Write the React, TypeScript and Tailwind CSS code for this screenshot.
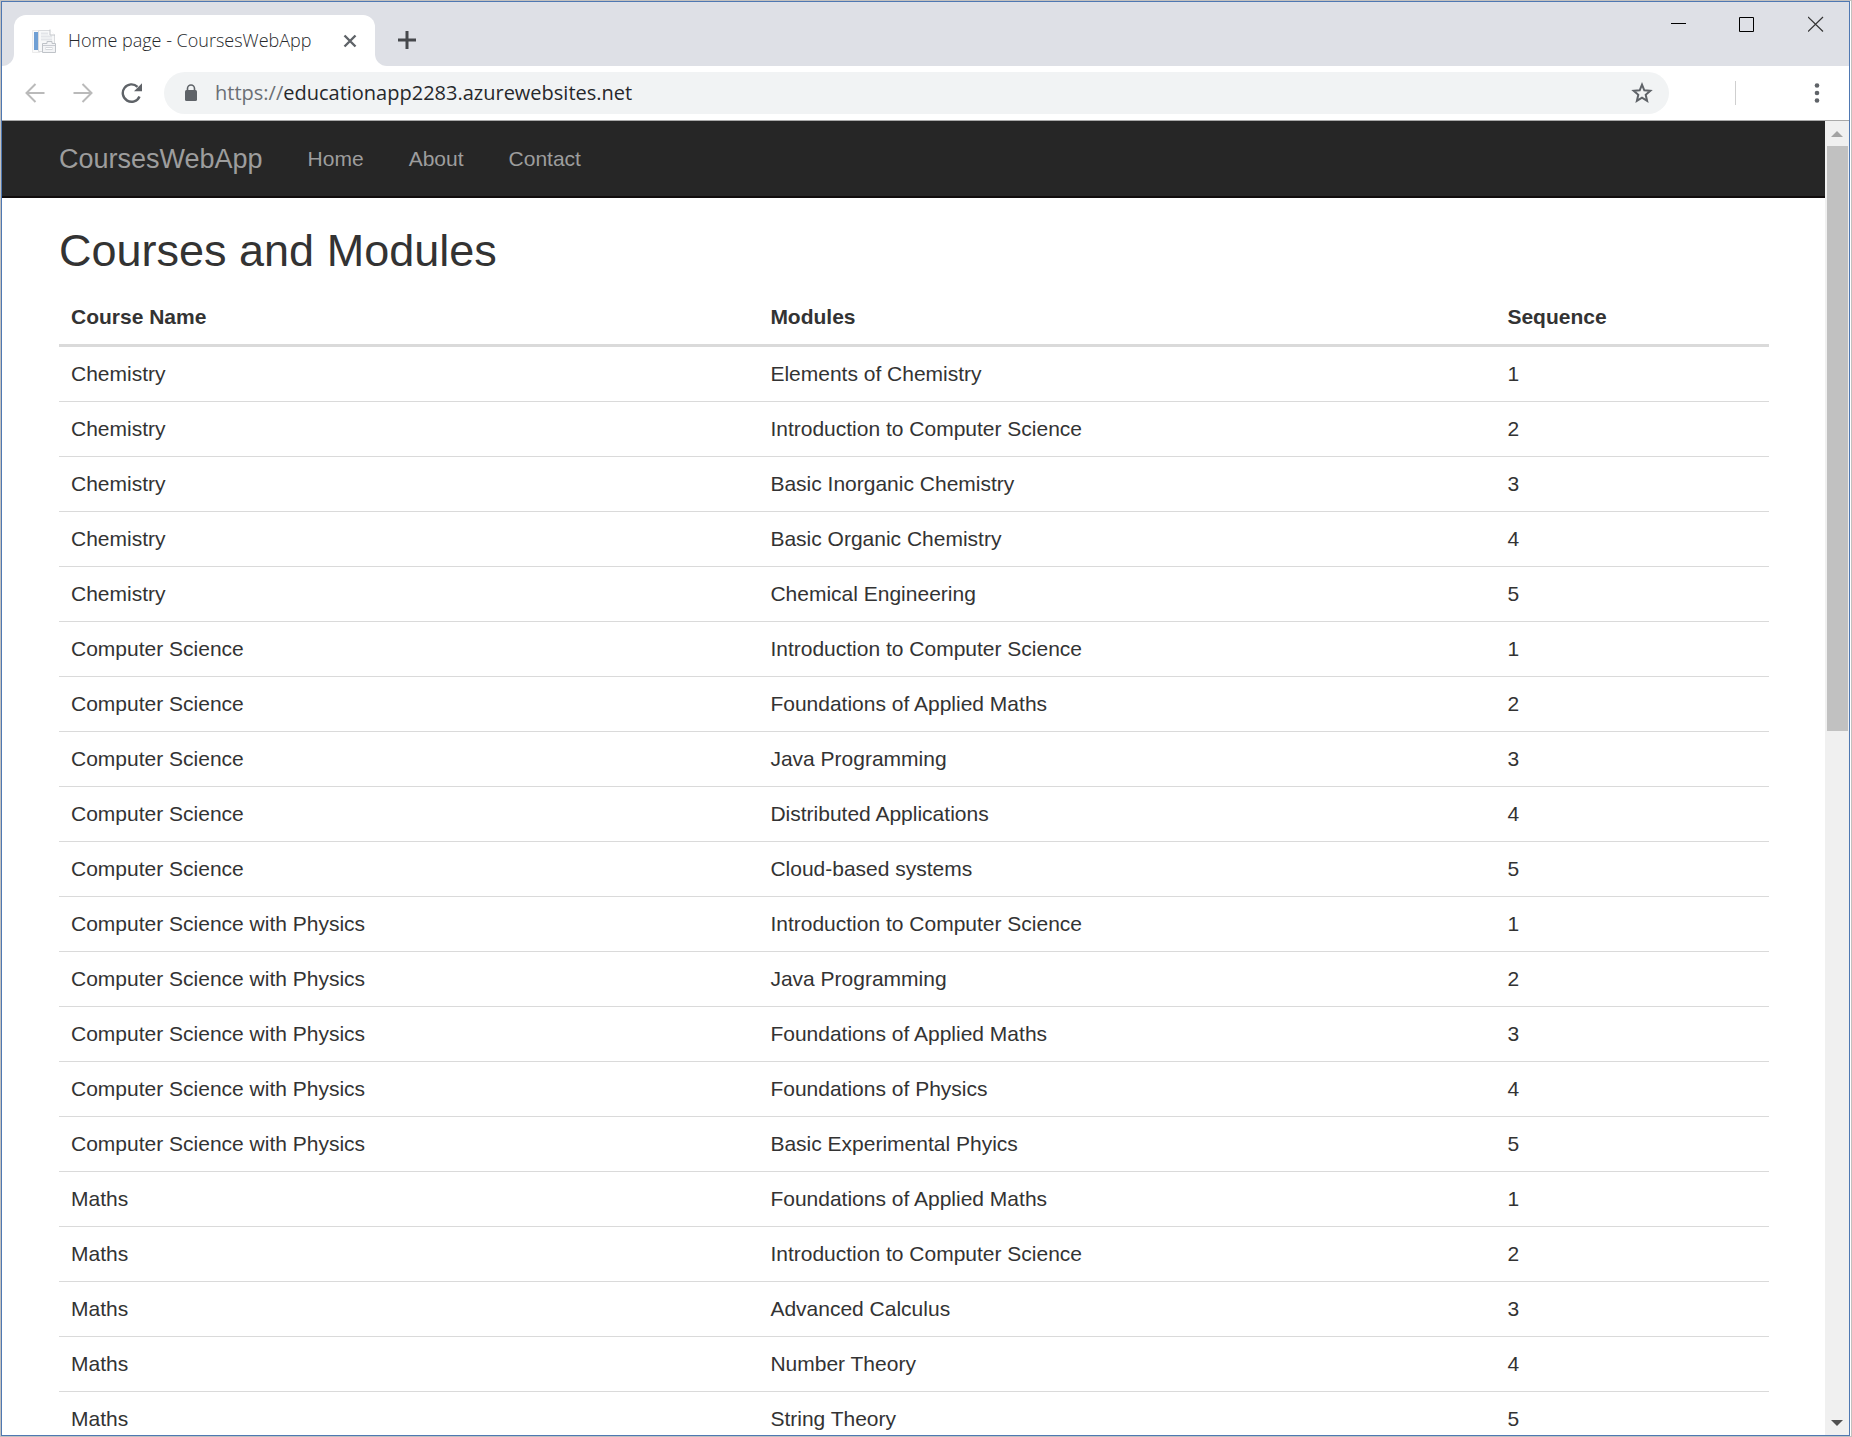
import React from "react";

const courses: [string, string[]][] = [
  ["Chemistry", ["Elements of Chemistry", "Introduction to Computer Science", "Basic Inorganic Chemistry", "Basic Organic Chemistry", "Chemical Engineering"]],
  ["Computer Science", ["Introduction to Computer Science", "Foundations of Applied Maths", "Java Programming", "Distributed Applications", "Cloud-based systems"]],
  ["Computer Science with Physics", ["Introduction to Computer Science", "Java Programming", "Foundations of Applied Maths", "Foundations of Physics", "Basic Experimental Phyics"]],
  ["Maths", ["Foundations of Applied Maths", "Introduction to Computer Science", "Advanced Calculus", "Number Theory", "String Theory"]],
];

function Favicon() {
  return (
    <svg width="24" height="24" viewBox="0 0 24 24" aria-hidden="true">
      <path d="M.5 1.500H8V23.500H.5Z" fill="#fafafa" stroke="#ebebeb" />
      <rect x="2" y="3" width="4" height="18" fill="#6f9fd4" />
      <path d="M6.500 1.500H18L22.500 6V22.500H6.500Z" fill="#f7f8f9" stroke="#d9dbde" />
      <path d="M9 4.500H16M9 7.500H20M9 10.500H20" stroke="#e3e5e9" strokeWidth="2" />
      <path d="M18 .5V6H23" fill="#fff" stroke="#c4c7cb" />
      <path d="M10.500 14.500V23.500H23.500V14.500H20V12.500H15V14.500Z" fill="#f3f4f6" stroke="#bfc3c8" />
      <path d="M11 16.500H23" stroke="#c9ccd2" />
      <rect x="14" y="18.500" width="6" height="2" fill="#fff" stroke="#d5d8dc" />
    </svg>
  );
}

function TabStrip() {
  return (
    <header className="flex h-16 shrink-0 items-start bg-[#dee0e6]">
      <div className="mt-[13px] flex h-[51px] items-stretch">
        <div className="flex w-3 items-end bg-white">
          <span className="h-[51px] w-3 rounded-br-xl bg-[#dee0e6]" />
        </div>
        <div className="flex w-[361px] items-center rounded-t-xl bg-white pr-[15px] pl-[18px]">
          <Favicon />
          <span className="ml-3 grow pb-0.5 text-[18px] leading-6 font-light whitespace-nowrap text-[#26282b]">Home page - CoursesWebApp</span>
          <button aria-label="Close tab" className="flex size-5 items-center justify-center">
            <svg width="14" height="14" viewBox="0 0 14 14" fill="none" stroke="#5f6368" strokeWidth="2.400"><path d="M1.500 1.500 12.500 12.500M12.500 1.500 1.500 12.500" /></svg>
          </button>
        </div>
        <div className="flex w-3 items-end bg-white">
          <span className="h-[51px] w-3 rounded-bl-xl bg-[#dee0e6]" />
        </div>
        <button aria-label="New tab" className="ml-2 flex h-[50px] w-6 items-center justify-center">
          <svg width="18" height="18" viewBox="0 0 18 18" fill="none" stroke="#46484c" strokeWidth="3"><path d="M9 0V18M0 9H18" /></svg>
        </button>
      </div>
      <div className="ml-auto flex h-11 items-center gap-[53px] pr-[25px]">
        <button aria-label="Minimize"><svg className="block" width="16" height="16" viewBox="0 0 16 16"><path d="M1 7.500H16" stroke="#000" /></svg></button>
        <button aria-label="Maximize"><svg className="block" width="16" height="16" viewBox="0 0 16 16"><path d="M.5 1.500H14.500V15.500H.5Z" fill="none" stroke="#000" /></svg></button>
        <button aria-label="Close"><svg className="block" width="16" height="16" viewBox="0 0 16 16"><path d="M0 1 15 15.500M15 1 0 15.500" stroke="#333" strokeWidth="1.200" /></svg></button>
      </div>
    </header>
  );
}

function Toolbar() {
  return (
    <div className="flex h-[55px] shrink-0 items-center border-b border-[#a9a9a9] bg-white pr-[22px] pl-[23px]">
      <div className="flex items-center gap-7">
        <button aria-label="Back"><svg className="block" width="20" height="20" viewBox="0 0 20 20" fill="none" stroke="#bababa" strokeWidth="2"><path d="M19.500 10H2M10.500 1 1.500 10 10.500 19" /></svg></button>
        <button aria-label="Forward"><svg className="block" width="20" height="20" viewBox="0 0 20 20" fill="none" stroke="#bababa" strokeWidth="2"><path d="M.5 10H18M9.500 1 18.500 10 9.500 19" /></svg></button>
        <button aria-label="Reload"><svg className="block" width="22" height="22" viewBox="0 0 22 22"><path d="M18.500 14.500A8.700 8.700 0 1 1 16.500 4.800" fill="none" stroke="#5f6368" strokeWidth="2.400" /><path d="M21 1.200V9.200H13Z" fill="#5f6368" /></svg></button>
      </div>
      <label className="ml-[21px] flex h-[42px] grow items-center rounded-full bg-[#f1f3f4] pr-4 pl-5 text-[20px] leading-7">
        <svg width="14" height="18" viewBox="0 0 14 18" aria-hidden="true"><path d="M3.500 7V4.500a3.500 3.500 0 0 1 7 0V7" fill="none" stroke="#5f6368" strokeWidth="1.600" /><rect x="1" y="6" width="12" height="11" rx="1.500" fill="#5f6368" /></svg>
        <span className="ml-[17px] text-[#6b6f74]">https://</span>
        <input aria-label="Address" className="min-w-0 grow bg-transparent text-[#26282b] outline-none" defaultValue="educationapp2283.azurewebsites.net" />
        <button aria-label="Bookmark this page" type="button"><svg className="block" width="22" height="22" viewBox="0 0 22 22" fill="none" stroke="#5f6368" strokeWidth="2"><path d="M11 2.700 13.300 8.300 19.300 8.800 14.700 12.800 16.100 18.800 11 15.600 5.900 18.800 7.300 12.800 2.700 8.800 8.700 8.300Z" /></svg></button>
      </label>
      <span className="ml-[66px] h-6 w-px bg-[#cfcfcf]" />
      <button aria-label="Menu" className="ml-[71px] flex w-5 justify-center">
        <svg width="6" height="20" viewBox="0 0 6 20" fill="#5f6368"><circle cx="3" cy="2.500" r="2.300" /><circle cx="3" cy="10" r="2.300" /><circle cx="3" cy="17.500" r="2.300" /></svg>
      </button>
    </div>
  );
}

function ScrollBar() {
  return (
    <div className="flex w-6 shrink-0 flex-col bg-[#f0f0f0]">
      <button aria-label="Scroll up" className="flex h-[25px] items-center justify-center">
        <svg width="12" height="6" viewBox="0 0 12 6"><path d="M0 6 6 0 12 6Z" fill="#a3a3a3" /></svg>
      </button>
      <div className="flex grow flex-col px-[2px] pr-px">
        <div className="h-[46.3%] bg-[#c1c1c1]" />
      </div>
      <button aria-label="Scroll down" className="flex h-[25px] items-center justify-center">
        <svg width="12" height="6" viewBox="0 0 12 6"><path d="M0 0H12L6 6Z" fill="#505050" /></svg>
      </button>
    </div>
  );
}

export default function App() {
  return (
    <div className="h-screen overflow-hidden border border-[#c3c1bf] bg-white pr-px">
      <div className="flex h-full flex-col border border-[#4f78b2] font-['Open_Sans',sans-serif]">
        <TabStrip />
        <Toolbar />
        <div className="flex min-h-0 grow font-['Liberation_Sans',Arial,sans-serif] text-[21px] leading-[30px] text-[#333333]">
          <div className="min-w-0 grow overflow-hidden">
            <nav className="flex h-[77px] items-center gap-[45px] border-b-2 border-[#100c0c] bg-[#262626] px-[57px] text-[#9d9d9d]">
              <a href="#" className="text-[27px]">CoursesWebApp</a>
              <a href="#">Home</a>
              <a href="#">About</a>
              <a href="#">Contact</a>
            </nav>
            <main className="px-14 pt-7 pl-[57px]">
              <h1 className="mb-[14px] text-[45px] leading-[50px]">Courses and Modules</h1>
              <table className="w-full table-fixed border-separate border-spacing-0 text-left">
                <thead>
                  <tr>
                    <th className="w-[40.9%] border-b-3 border-[#dadada] p-3">Course Name</th>
                    <th className="w-[43.1%] border-b-3 border-[#dadada] p-3">Modules</th>
                    <th className="w-[16%] border-b-3 border-[#dadada] p-3">Sequence</th>
                  </tr>
                </thead>
                <tbody>
                  {courses.map(([course, modules]) =>
                    modules.map((module, i) => (
                      <tr key={course + module}>
                        <td className="border-b border-[#dadada] p-3">{course}</td>
                        <td className="border-b border-[#dadada] p-3">{module}</td>
                        <td className="border-b border-[#dadada] p-3">{i + 1}</td>
                      </tr>
                    ))
                  )}
                </tbody>
              </table>
            </main>
          </div>
          <ScrollBar />
        </div>
      </div>
    </div>
  );
}
